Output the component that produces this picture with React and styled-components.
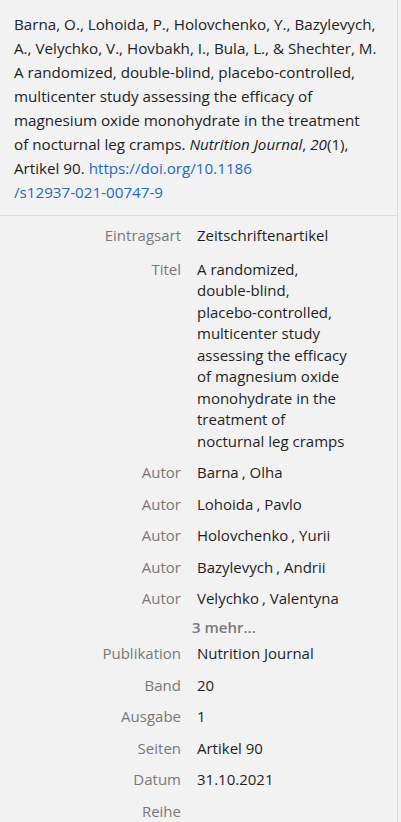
import React from 'react';
import styled, { createGlobalStyle } from 'styled-components';

const GlobalStyle = createGlobalStyle`
  html, body {
    margin: 0;
    padding: 0;
    background: #f2f2f2;
  }
  body {
    font-family: 'Open Sans', 'Noto Sans', 'Liberation Sans', sans-serif;
    color: #1f1f1f;
  }
`;

const Pane = styled.div`
  width: 397px;
  min-height: 822px;
  border-right: 1px solid #dcdcdc;
  background: #f2f2f2;
`;

const Citation = styled.div`
  padding: 12px 17px 11px 14px;
  font-size: 15.2px;
  line-height: 24px;
  color: #222;
  border-bottom: 1px solid #dedede;
`;

const Link = styled.a`
  color: #1a6bc5;
  text-decoration: none;
`;

const NoWrap = styled.span`
  white-space: nowrap;
`;

const Fields = styled.div`
  padding-top: 4px;
`;

const Row = styled.div`
  display: grid;
  grid-template-columns: 181px 156px;
  column-gap: 16px;
  padding: ${(p) => (p.compact ? '2px 0 0' : '5px 0')};
  margin-bottom: ${(p) => (p.head ? '2px' : '0')};
  font-size: 15px;
  line-height: 21.5px;
`;

const Label = styled.div`
  text-align: right;
  color: #787878;
`;

const Value = styled.div`
  color: #1f1f1f;
`;

const Comma = styled.span`
  margin-left: 3px;
`;

const More = styled.div`
  grid-column: 2;
  margin-left: -5px;
  color: #7a7a7a;
  font-weight: 600;
`;

const authors = [
  ['Barna', 'Olha'],
  ['Lohoida', 'Pavlo'],
  ['Holovchenko', 'Yurii'],
  ['Bazylevych', 'Andrii'],
  ['Velychko', 'Valentyna'],
];

const rest = [
  ['Publikation', 'Nutrition Journal'],
  ['Band', '20'],
  ['Ausgabe', '1'],
  ['Seiten', 'Artikel 90'],
  ['Datum', '31.10.2021'],
  ['Reihe', ''],
];

export default function App() {
  return (
    <>
      <GlobalStyle />
      <Pane>
        <Citation>
          Barna, O., Lohoida, P., Holovchenko, Y., Bazylevych, A., Velychko, V.,
          Hovbakh, I., Bula, L., &amp; Shechter, M. A randomized, double-blind,
          placebo-controlled, multicenter study assessing the efficacy of magnesium
          oxide monohydrate in the treatment
          <br />
          of nocturnal leg cramps. <i>Nutrition Journal</i>, <i>20</i>(1), Artikel 90.{' '}
          <Link href="#">
            <NoWrap>https://doi.org/10.1186</NoWrap>
            <wbr />
            <NoWrap>/s12937-021-00747-9</NoWrap>
          </Link>
        </Citation>
        <Fields>
          <Row head>
            <Label>Eintragsart</Label>
            <Value>Zeitschriftenartikel</Value>
          </Row>
          <Row>
            <Label>Titel</Label>
            <Value>
              A randomized, double&#8209;blind, placebo&#8209;controlled, multicenter study
              assessing the efficacy of magnesium oxide monohydrate in the
              treatment of nocturnal leg cramps
            </Value>
          </Row>
          {authors.map(([last, first]) => (
            <Row key={last}>
              <Label>Autor</Label>
              <Value>
                {last}
                <Comma>, {first}</Comma>
              </Value>
            </Row>
          ))}
          <Row compact>
            <More>3 mehr...</More>
          </Row>
          {rest.map(([label, value]) => (
            <Row key={label}>
              <Label>{label}</Label>
              <Value>{value}</Value>
            </Row>
          ))}
        </Fields>
      </Pane>
    </>
  );
}
